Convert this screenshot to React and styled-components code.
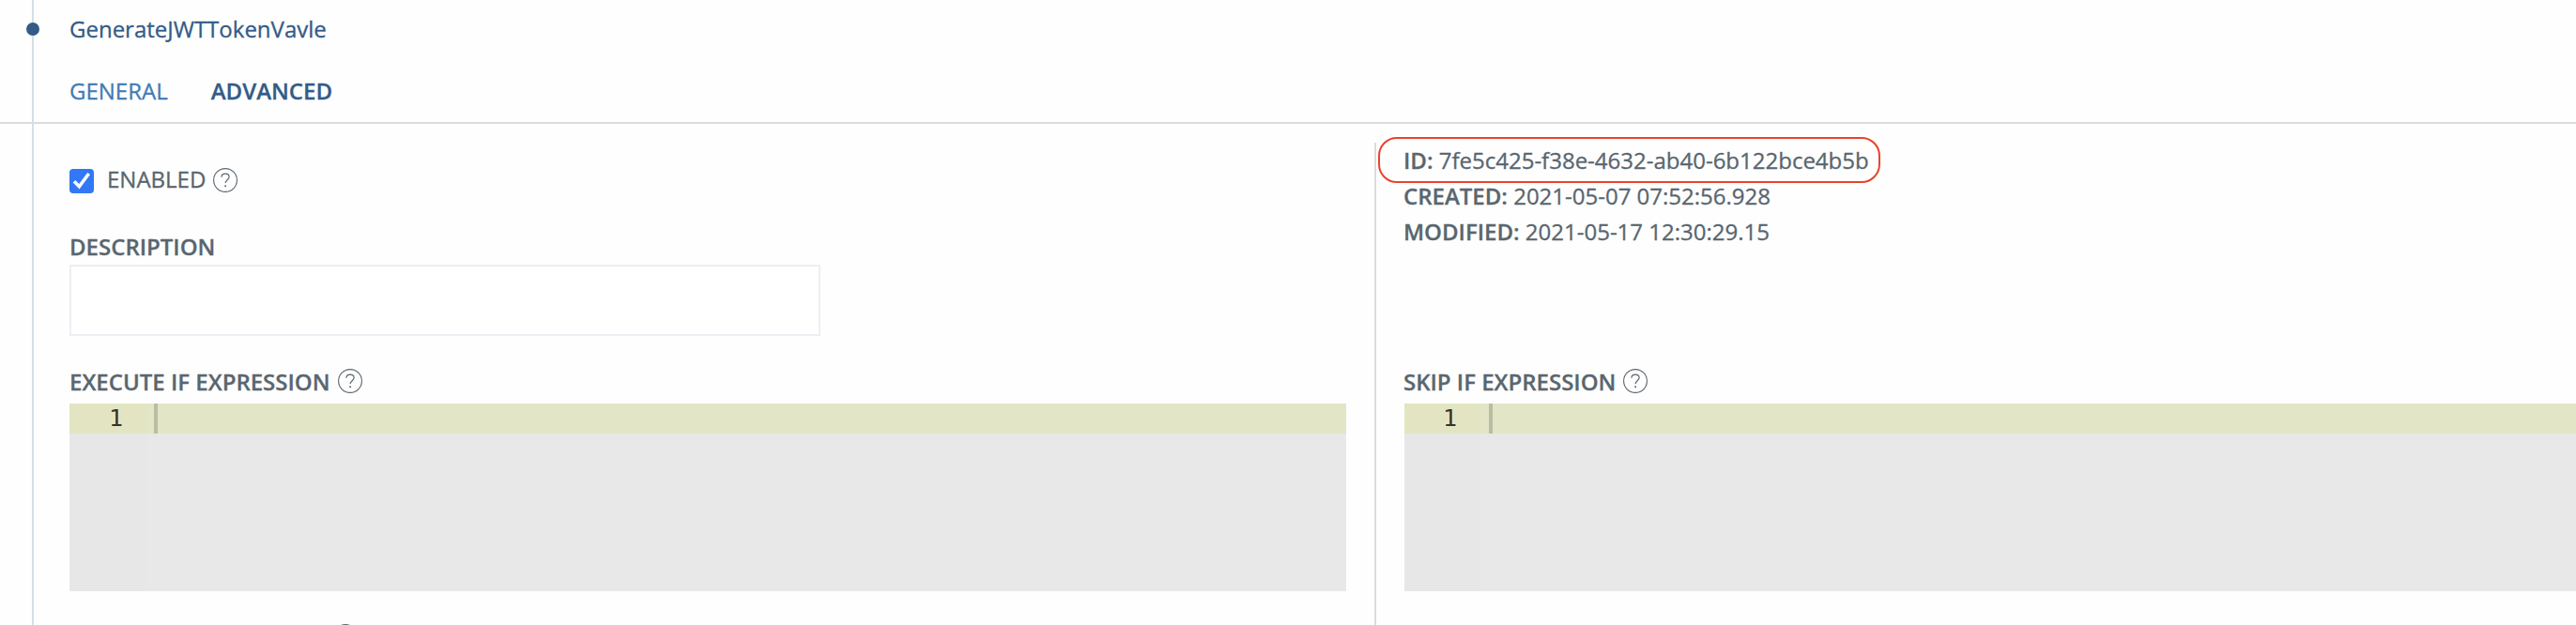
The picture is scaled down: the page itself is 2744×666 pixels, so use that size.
import styled, { createGlobalStyle } from 'styled-components';

const DETAILS = [
    { label: 'ID:', value: '7fe5c425-f38e-4632-ab40-6b122bce4b5b', highlighted: true },
    { label: 'CREATED:', value: '2021-05-07 07:52:56.928' },
    { label: 'MODIFIED:', value: '2021-05-17 12:30:29.15' },
];

const HelpIcon = () => (
    <HelpIconStyles viewBox="0 0 26 26" fill="none" stroke="currentColor">
        <circle cx="13" cy="13" r="12.4" strokeWidth="1.1" />
        <path d="M8.9 9.7c.1-2.3 1.8-3.6 4.1-3.6s4.1 1.3 4.1 3.4c0 3.1-4 3.3-4 6.6" strokeWidth="1.2" />
        <circle cx="13.1" cy="19.3" r="1" fill="currentColor" stroke="none" />
    </HelpIconStyles>
);

const ExpressionEditor = ({ label, inset = 0 }) => (
    <div>
        <EditorLabel>
            {label}
            <HelpIcon />
        </EditorLabel>
        <Editor $inset={inset}>
            <Gutter>
                <LineNumber $inset={inset}>1</LineNumber>
            </Gutter>
            <Code>
                <ActiveLine>
                    <Cursor />
                </ActiveLine>
            </Code>
        </Editor>
    </div>
);

const App = () => {
    return (
        <Page>
            <GlobalStyles />
            <Header>
                <Dot />
                <Title>GenerateJWTTokenVavle</Title>
            </Header>
            <Tabs>
                <Tab>GENERAL</Tab>
                <Tab $active>ADVANCED</Tab>
            </Tabs>
            <Columns>
                <MainColumn>
                    <Enabled>
                        <Checkbox>
                            <svg viewBox="0 0 26 26" fill="none" stroke="#fff" strokeWidth="3.6">
                                <path d="M5 13.2l5.4 5.5L20.6 5" />
                            </svg>
                        </Checkbox>
                        ENABLED
                        <HelpIcon />
                    </Enabled>
                    <Label>DESCRIPTION</Label>
                    <Input />
                    <ExpressionEditor label="EXECUTE IF EXPRESSION" />
                    <NextField>
                        <HelpIcon />
                    </NextField>
                </MainColumn>
                <SideColumn>
                    <Details>
                        {DETAILS.map(({ label, value, highlighted }) => (
                            <Detail key={label}>
                                <b>{label}</b> {value}
                                {highlighted && <Highlight />}
                            </Detail>
                        ))}
                    </Details>
                    <ExpressionEditor label="SKIP IF EXPRESSION" inset={1} />
                </SideColumn>
            </Columns>
        </Page>
    );
};

const GlobalStyles = createGlobalStyle`
    * {
        box-sizing: border-box;
    }

    body {
        background: #fefefe;
        margin: 0;
    }
`;

const Page = styled.div`
    -webkit-text-stroke: 0.3px currentColor;
    background: linear-gradient(#d6dfe7, #d6dfe7) 34px 0 / 2px 100% no-repeat #fefefe;
    color: #59666f;
    display: flex;
    flex-direction: column;
    font-family: 'Open Sans', sans-serif;
    font-size: 24px;
    height: 666px;
    overflow: hidden;
`;

const Header = styled.div`
    align-items: center;
    display: flex;
    flex: none;
    height: 62px;
    padding-left: 28px;
`;

const Dot = styled.span`
    background: #335b88;
    border-radius: 50%;
    height: 14px;
    width: 14px;
`;

const Title = styled.span`
    color: #335b88;
    line-height: 62px;
    margin-left: 32px;
`;

const Tabs = styled.div`
    border-bottom: 2px solid #dcdcdc;
    display: flex;
    flex: none;
    gap: 46px;
    height: 70px;
    padding-left: 74px;
`;

const Tab = styled.span`
    color: ${({ $active }) => ($active ? '#335b88' : '#427bb5')};
    font-weight: ${({ $active }) => ($active ? 600 : 400)};
    line-height: 69px;
`;

const Columns = styled.div`
    display: grid;
    flex: 1;
    grid-template-columns: 1464px 1fr;
    min-height: 0;
`;

const MainColumn = styled.div`
    padding: 39px 30px 0 74px;
`;

const SideColumn = styled.div`
    border-left: 2px solid #dcdcdc;
    margin-top: 20px;
    padding-left: 29px;
`;

const HelpIconStyles = styled.svg`
    display: block;
    flex: none;
    height: 26px;
    margin-left: 8px;
    width: 26px;
`;

const Enabled = styled.div`
    align-items: center;
    display: flex;
    height: 40px;
    line-height: 40px;

    > svg {
        margin-top: 2px;
    }
`;

const Checkbox = styled.span`
    background: #3178f6;
    border-radius: 4px;
    height: 26px;
    margin: 4px 14px 0 0;
    width: 26px;

    svg {
        display: block;
    }
`;

const Label = styled.div`
    font-weight: 600;
    height: 40px;
    line-height: 41px;
    margin-top: 31px;
`;

const Input = styled.div`
    background: #fff;
    border: 2px solid #ebeff3;
    height: 76px;
    margin-bottom: 28px;
    width: 800px;
`;

const EditorLabel = styled.div`
    align-items: center;
    display: flex;
    font-weight: 600;
    height: 44px;
    line-height: 42px;
    padding-bottom: 2px;

    svg {
        margin-bottom: 2px;
    }
`;

const Editor = styled.div`
    background: #e8e8e8;
    display: flex;
    height: 200px;
    margin-left: ${({ $inset }) => $inset}px;
`;

const Gutter = styled.div`
    background: #e7e7e7;
    width: 82px;
`;

const LineNumber = styled.div`
    -webkit-text-stroke: 0;
    background: #e3e5c2;
    color: #333;
    font-family: 'DejaVu Sans Mono', monospace;
    font-size: 25px;
    height: 32px;
    line-height: 31px;
    padding-right: ${({ $inset }) => 25 + $inset}px;
    text-align: right;
`;

const Code = styled.div`
    flex: 1;
`;

const ActiveLine = styled.div`
    background: #e2e6c7;
    height: 32px;
    padding-left: 8px;
`;

const Cursor = styled.div`
    background: #babda3;
    height: 32px;
    width: 4px;
`;

const NextField = styled.div`
    margin-top: 35px;
    padding-left: 273px;
`;

const Details = styled.div`
    height: 234px;
`;

const Detail = styled.div`
    line-height: 38px;
    position: relative;

    b {
        font-weight: 600;
    }
`;

const Highlight = styled.span`
    border: 2px solid #e9432b;
    border-radius: 20px;
    height: 49px;
    left: -27px;
    position: absolute;
    top: -6px;
    width: 535px;
`;

export default App;
